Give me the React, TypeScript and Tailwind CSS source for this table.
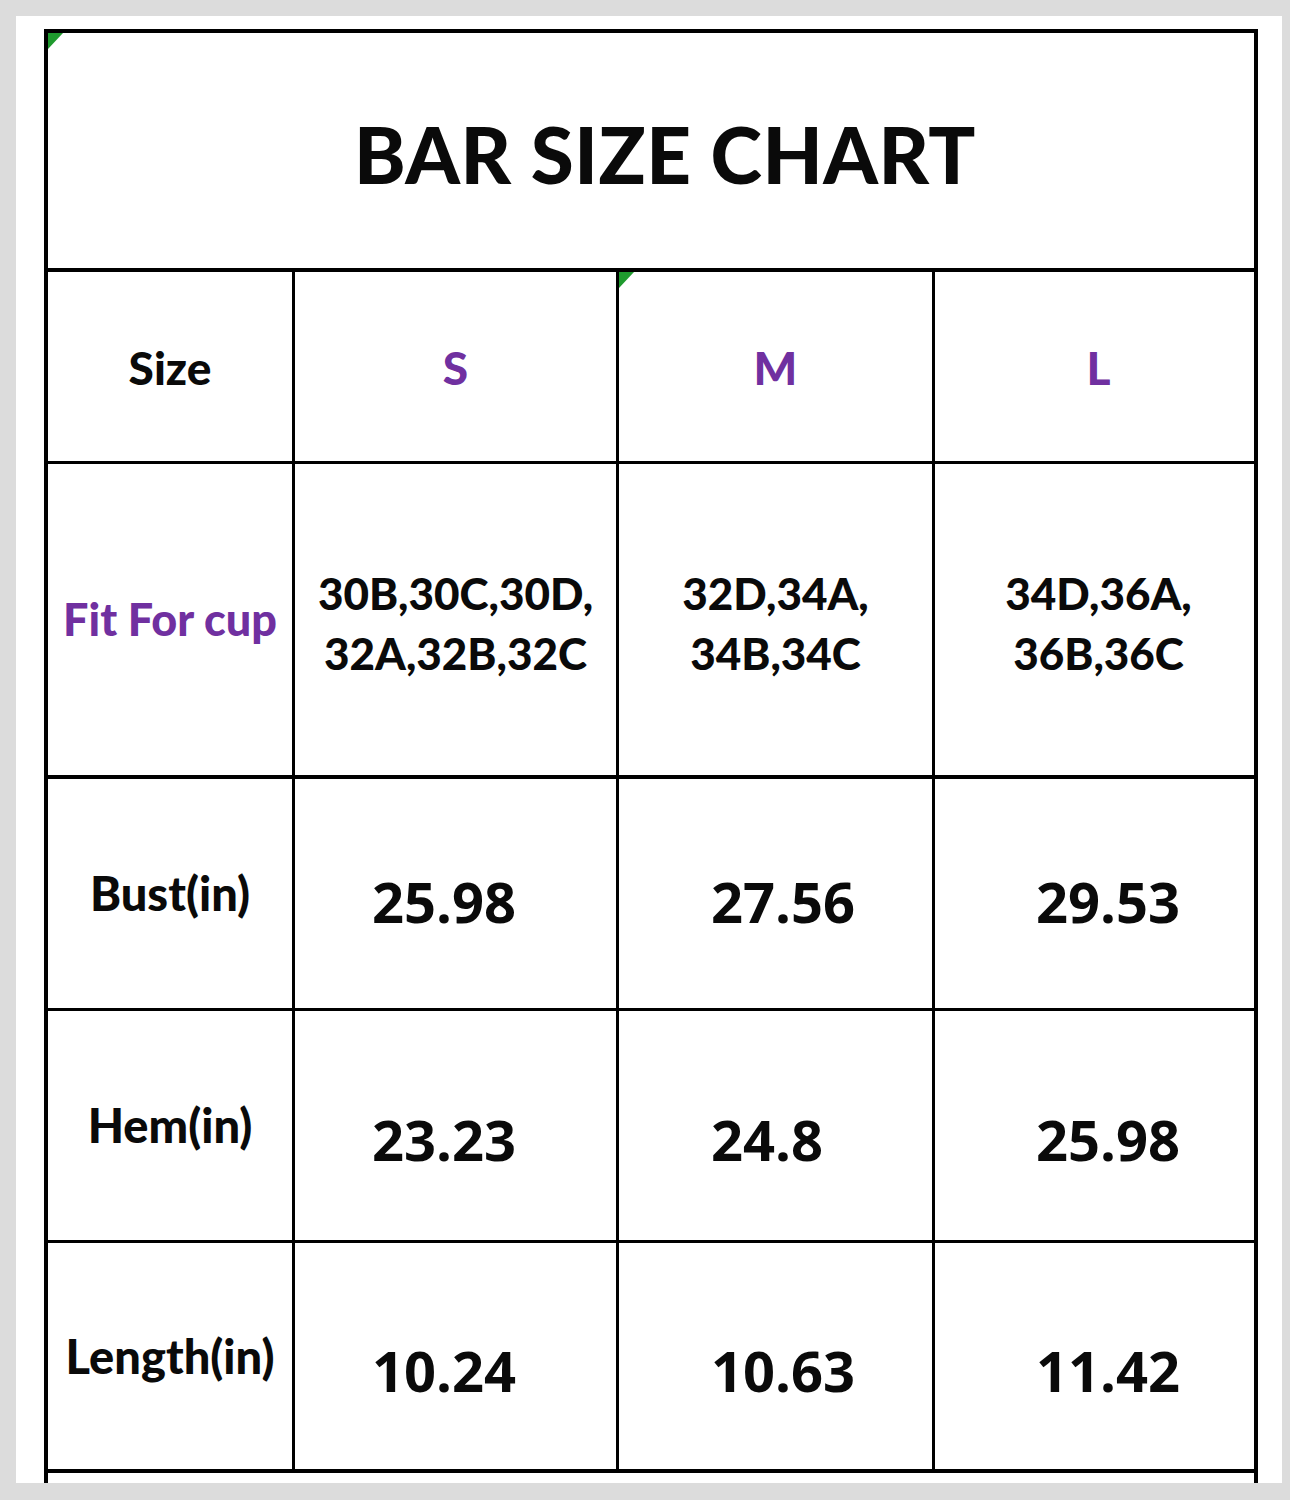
import React from "react";

const lato = { fontFamily: "Lato, 'Open Sans', sans-serif" };
const open = { fontFamily: "'Open Sans', 'Noto Sans', sans-serif" };

function Tri() {
  return (
    <svg width="15" height="16" viewBox="0 0 15 16" className="absolute left-0 top-0">
      <polygon points="0,0 15,0 0,16" fill="#1f9a2e" />
    </svg>
  );
}

type Row = { label: string; vals: string[]; h: string; b: string; pt: string };

const rows: Row[] = [
  { label: "Bust(in)", vals: ["25.98", "27.56", "29.53"], h: "h-[232px]", b: "border-b-[3px]", pt: "pt-[14px]" },
  { label: "Hem(in)", vals: ["23.23", "24.8", "25.98"], h: "h-[232px]", b: "border-b-[3px]", pt: "pt-[26px]" },
  { label: "Length(in)", vals: ["10.24", "10.63", "11.42"], h: "h-[230px]", b: "border-b-4", pt: "pt-[28px]" },
];

const heavy = "font-black";

export default function App() {
  return (
    <div className="w-[1290px] h-[1500px] bg-[#dcdcdc] pt-[16px] pl-[16px]">
      <div className="w-[1266px] h-[1467px] bg-white overflow-hidden pl-[28px] pt-[13px]">
        <div className="w-[1214px] border-l-4 border-r-4 border-t-4 border-black text-[#0a0a0a]">
          {/* title */}
          <div className="relative h-[239px] border-b-4 border-black flex items-center justify-center">
            <Tri />
            <span style={lato} className={`${heavy} text-[78px] leading-none pl-[28px] pt-[6px] tracking-[0.5px]`}>
              BAR SIZE CHART
            </span>
          </div>
          {/* size row */}
          <div className="flex h-[192px] border-b-[3px] border-black">
            <div className="w-[247px] border-r-[3px] border-black flex items-center justify-center pt-[2px]">
              <span style={lato} className={`${heavy} text-[46px] leading-none`}>Size</span>
            </div>
            <div className="w-[324px] border-r-[3px] border-black flex items-center justify-center pt-[2px]">
              <span style={lato} className={`${heavy} text-[46px] leading-none text-[#7030a0]`}>S</span>
            </div>
            <div className="relative w-[316px] border-r-[3px] border-black flex items-center justify-center pt-[2px]">
              <Tri />
              <span style={lato} className={`${heavy} text-[46px] leading-none text-[#7030a0]`}>M</span>
            </div>
            <div className="flex-1 flex items-center justify-center pt-[2px] pl-[8px]">
              <span style={lato} className={`${heavy} text-[46px] leading-none text-[#7030a0]`}>L</span>
            </div>
          </div>
          {/* fit row */}
          <div className="flex h-[315px] border-b-4 border-black">
            <div className="w-[247px] border-r-[3px] border-black flex items-center justify-center">
              <span style={lato} className={`${heavy} text-[45px] leading-none text-[#7030a0]`}>Fit For cup</span>
            </div>
            {[
              ["30B,30C,30D,", "32A,32B,32C"],
              ["32D,34A,", "34B,34C"],
              ["34D,36A,", "36B,36C"],
            ].map((l, i) => (
              <div
                key={i}
                className={
                  i === 0
                    ? "w-[324px] border-r-[3px] border-black flex flex-col items-center justify-center pt-[6px]"
                    : i === 1
                    ? "w-[316px] border-r-[3px] border-black flex flex-col items-center justify-center pt-[6px]"
                    : "flex-1 flex flex-col items-center justify-center pt-[6px] pl-[8px]"
                }
              >
                <span style={lato} className={`${heavy} text-[44px] leading-[60px]`}>{l[0]}</span>
                <span style={lato} className={`${heavy} text-[44px] leading-[60px]`}>{l[1]}</span>
              </div>
            ))}
          </div>
          {rows.map((r, i) => (
            <div key={i} className={`flex ${r.h} ${r.b} border-black`}>
              <div className="w-[247px] border-r-[3px] border-black flex items-center justify-center">
                <span style={lato} className={`${heavy} text-[47px] leading-none`}>{r.label}</span>
              </div>
              <div className={`w-[324px] border-r-[3px] border-black flex items-center pl-[77px] ${r.pt}`}>
                <span style={open} className="font-bold text-[56px] leading-none">{r.vals[0]}</span>
              </div>
              <div className={`w-[316px] border-r-[3px] border-black flex items-center pl-[92px] ${r.pt}`}>
                <span style={open} className="font-bold text-[56px] leading-none">{r.vals[1]}</span>
              </div>
              <div className={`flex-1 flex items-center pl-[101px] ${r.pt}`}>
                <span style={open} className="font-bold text-[56px] leading-none">{r.vals[2]}</span>
              </div>
            </div>
          ))}
          <div className="h-[40px]" />
        </div>
      </div>
    </div>
  );
}
